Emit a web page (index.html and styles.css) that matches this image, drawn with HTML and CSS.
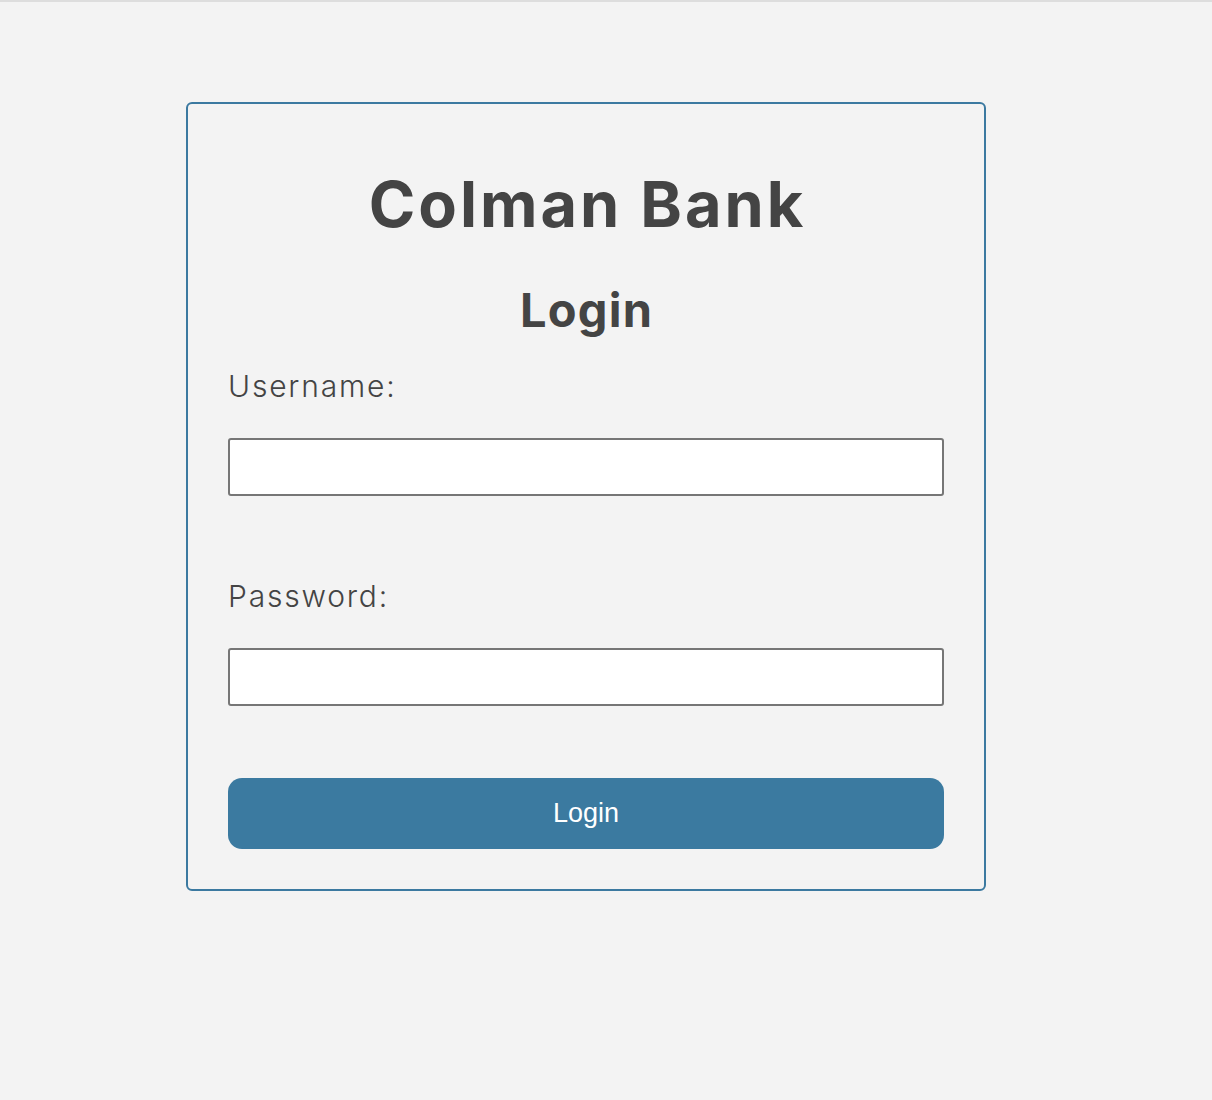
FILE: index.html
```html
<!DOCTYPE html>
<html lang="en">
<head>
<meta charset="utf-8">
<title>Colman Bank - Login</title>
<link rel="stylesheet" href="styles.css">
</head>
<body>
<div class="topline"></div>
<main class="page">
  <form class="card" onsubmit="return false;">
    <h1 class="brand">Colman Bank</h1>
    <h2 class="heading">Login</h2>
    <label class="label" for="username">Username:</label>
    <input class="field" id="username" type="text">
    <label class="label label-pw" for="password">Password:</label>
    <input class="field" id="password" type="password">
    <button class="btn" type="submit">Login</button>
  </form>
</main>
</body>
</html>
```

FILE: styles.css
```css
* { box-sizing: border-box; }

html, body {
  margin: 0;
  padding: 0;
  background: #f3f3f3;
  height: 100%;
}

body {
  font-family: Inter, "Noto Sans", sans-serif;
  color: #444444;
}

.topline {
  height: 2px;
  background: #dddddd;
}

.page {
  padding: 100px 0 0 186px;
}

.card {
  width: 800px;
  border: 2px solid #3b79a0;
  border-radius: 6px;
  padding: 40px;
  display: flex;
  flex-direction: column;
}

.brand {
  margin: 20px 0 0;
  height: 80px;
  line-height: 80px;
  font-size: 63px;
  font-weight: 700;
  letter-spacing: 3px;
  padding-left: 3px;
  text-align: center;
  color: #444444;
}

.heading {
  margin: 36px 0 0;
  height: 60px;
  line-height: 60px;
  font-size: 47px;
  font-weight: 700;
  letter-spacing: 1.2px;
  padding-left: 1.2px;
  text-align: center;
  color: #444444;
}

.label {
  margin-top: 26px;
  height: 40px;
  line-height: 40px;
  font-size: 30px;
  font-weight: 300;
  letter-spacing: 1.8px;
  color: #444444;
}

.label-pw {
  margin-top: 80px;
}

.field {
  margin-top: 32px;
  height: 58px;
  width: 100%;
  border: 2px solid #767676;
  border-radius: 3px;
  background: #ffffff;
  font-size: 24px;
  padding: 0 10px;
}

.btn {
  margin-top: 72px;
  height: 71px;
  width: 100%;
  border: none;
  border-radius: 14px;
  background: #3b7aa0;
  color: #ffffff;
  font-family: "Liberation Sans", Arial, sans-serif;
  font-size: 27px;
  cursor: pointer;
}
```
